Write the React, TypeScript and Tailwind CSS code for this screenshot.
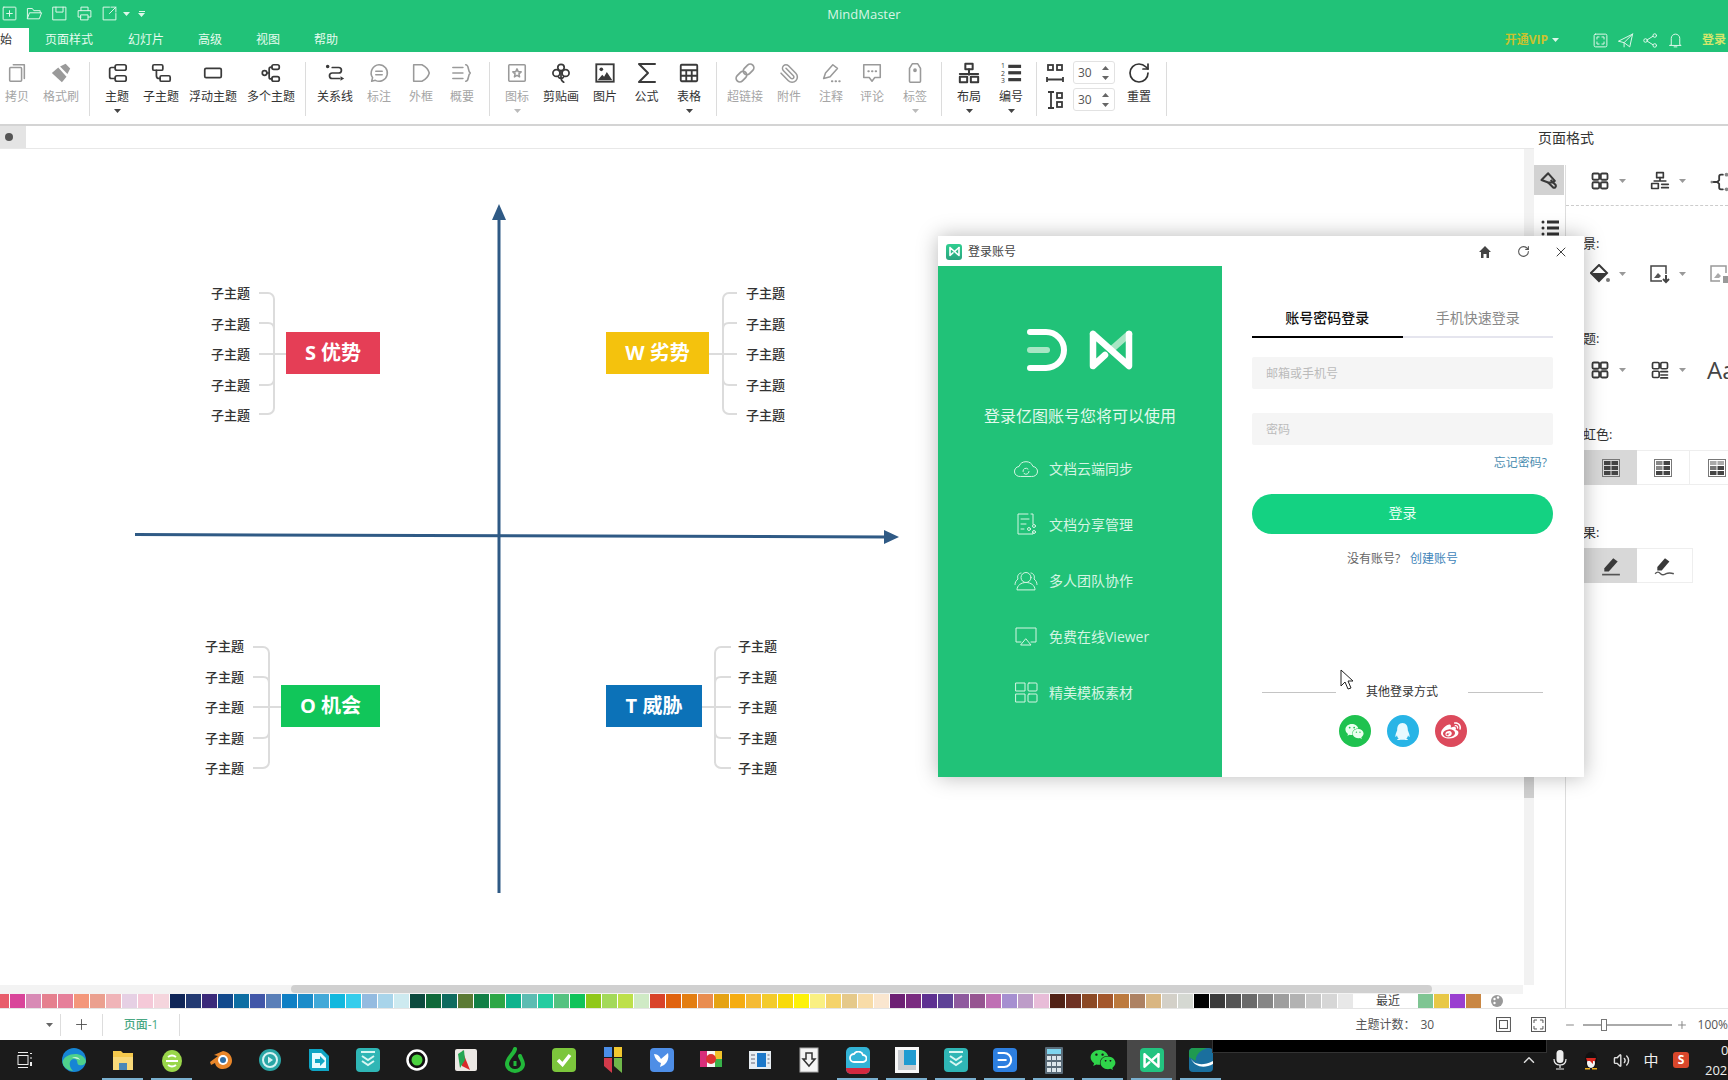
import type { ReactNode } from 'react';
import { Paperclip, RotateCw, X, RotateCcw, Plus, Minus, ChevronUp, Volume2 } from 'lucide-react';
import { FaWeixin, FaQq, FaWeibo } from 'react-icons/fa';

const DARK = '#3a3a3a';
const OFF = '#9a9a9a';

function Svg({ children, size = 22, color = DARK, sw = 1.9, className = '' }: { children: ReactNode; size?: number; color?: string; sw?: number; className?: string }) {
    return (
        <svg width={size} height={size} viewBox="0 0 24 24" fill="none" stroke={color} strokeWidth={sw} strokeLinecap="round" strokeLinejoin="round" className={className}>
            {children}
        </svg>
    );
}

function Caret({ color = '#444' }: { color?: string }) {
    return (
        <svg width="7" height="4" viewBox="0 0 7 4" className="shrink-0">
            <path d="M0 0h7L3.5 4z" fill={color} />
        </svg>
    );
}

function Tool({ w, label, off, caret, children }: { w: string; label: string; off?: boolean; caret?: boolean; children: ReactNode }) {
    return (
        <div className={`flex flex-col items-center ${w}`}>
            <div className="h-[22px] flex items-center justify-center">{children}</div>
            <div className={`mt-[5px] h-[16px] text-[12px] leading-[16px] whitespace-nowrap ${off ? 'text-[#a5a5a5]' : 'text-[#333]'}`}>{label}</div>
            {caret && (
                <div className="mt-[4px]">
                    <Caret color={off ? '#bbb' : '#444'} />
                </div>
            )}
        </div>
    );
}

function Sep() {
    return <div className="w-px h-[54px] bg-[#dcdcdc] shrink-0" />;
}

function GridIcon({ size = 20 }: { size?: number }) {
    return (
        <Svg size={size} sw={2.2}>
            <rect x="3" y="3" width="8" height="7.5" rx="1.5" />
            <rect x="13" y="3" width="8" height="7.5" rx="1.5" />
            <rect x="3" y="13.5" width="8" height="7.5" rx="1.5" />
            <rect x="13" y="13.5" width="8" height="7.5" rx="1.5" />
        </Svg>
    );
}

function TableCell({ shade }: { shade: number }) {
    const light = shade === 0 ? '#444' : shade === 1 ? '#888' : '#aaa';
    return (
        <svg width="18" height="18" viewBox="0 0 18 18">
            <rect x="0.5" y="0.5" width="17" height="17" fill="none" stroke="#777" />
            <rect x="2" y="2" width="6.5" height="4" fill={light} />
            <rect x="9.5" y="2" width="6.5" height="4" fill={shade === 2 ? '#aaa' : '#444'} />
            <rect x="2" y="7" width="6.5" height="4" fill={shade === 2 ? '#777' : light} />
            <rect x="9.5" y="7" width="6.5" height="4" fill="#444" />
            <rect x="2" y="12" width="6.5" height="4" fill="#444" />
            <rect x="9.5" y="12" width="6.5" height="4" fill="#444" />
        </svg>
    );
}

function BowTie({ size = 44, pale = '#a8e6c4', sw = 6.5 }: { size?: number; pale?: string; sw?: number }) {
    return (
        <svg width={size} height={size} viewBox="0 0 44 40" fill="none" strokeLinecap="round" strokeLinejoin="round">
            <path d="M23 19L40 4" stroke={pale} strokeWidth={sw} />
            <path d="M4 4v32l12-11M4 4l36 32V4" stroke="#fff" strokeWidth={sw} />
        </svg>
    );
}

function Subs() {
    return (
        <div className="flex flex-col justify-between h-[142px] w-[39px]">
            {[0, 1, 2, 3, 4].map((i) => (
                <div key={i} className="h-[20px] text-[13px] leading-[20px] font-medium text-[#333] whitespace-nowrap">
                    子主题
                </div>
            ))}
        </div>
    );
}

function Topic({ label, className }: { label: string; className: string }) {
    return <div className={`h-[42px] mb-[2px] flex items-center justify-center text-white font-bold text-[20px] whitespace-nowrap ${className}`}>{label}</div>;
}

const SWATCHES = [
    'bg-[#e85d6c] w-[10px]', 'bg-[#d9459a]', 'bg-[#d88ab5]', 'bg-[#e5808f]', 'bg-[#e67f9a]', 'bg-[#f4977b]', 'bg-[#eba08f]', 'bg-[#f0b4b8]', 'bg-[#e6d0e4]', 'bg-[#f5c9d8]', 'bg-[#f5d5dd]',
    'bg-[#0f2557]', 'bg-[#233a72]', 'bg-[#3b2a7a]', 'bg-[#12498c]', 'bg-[#0e6ea3]', 'bg-[#4257a8]', 'bg-[#5a7fb8]', 'bg-[#0f7fc4]', 'bg-[#1c8cc9]', 'bg-[#42a9d8]', 'bg-[#12b8de]', 'bg-[#36cdec]', 'bg-[#94bbe0]', 'bg-[#a8d4ea]', 'bg-[#cdeaf0]',
    'bg-[#0c4a3e]', 'bg-[#10693a]', 'bg-[#0f6b5f]', 'bg-[#5b7a35]', 'bg-[#117f46]', 'bg-[#2da646]', 'bg-[#0fb38d]', 'bg-[#5cbcb2]', 'bg-[#25cca0]', 'bg-[#55c280]', 'bg-[#10c35a]', 'bg-[#90c81a]', 'bg-[#a3d95a]', 'bg-[#bde04a]', 'bg-[#cfeac5]',
    'bg-[#d9432a]', 'bg-[#e0630f]', 'bg-[#e37e12]', 'bg-[#e98d50]', 'bg-[#e5a314]', 'bg-[#f5ac12]', 'bg-[#f5bb35]', 'bg-[#f3cb2c]', 'bg-[#f8da0a]', 'bg-[#fdf209]', 'bg-[#faf082]', 'bg-[#f5d36a]', 'bg-[#e5c98a]', 'bg-[#f8dca8]', 'bg-[#fae6cf]',
    'bg-[#6d2174]', 'bg-[#7a2c80]', 'bg-[#5e3191]', 'bg-[#5e4296]', 'bg-[#8f5a9e]', 'bg-[#965591]', 'bg-[#bf70b4]', 'bg-[#a68fd0]', 'bg-[#bd9cc8]', 'bg-[#e8bcd8]',
    'bg-[#512216]', 'bg-[#6e3224]', 'bg-[#8c4a26]', 'bg-[#a3572c]', 'bg-[#bc7a3e]', 'bg-[#ad8263]', 'bg-[#d9b682]', 'bg-[#d3d0c8]', 'bg-[#d5d8d2]',
    'bg-[#000000]', 'bg-[#3a3a3a]', 'bg-[#555555]', 'bg-[#6a6a6a]', 'bg-[#868686]', 'bg-[#9e9e9e]', 'bg-[#b2b2b2]', 'bg-[#c8c8c8]', 'bg-[#d6d6d6]', 'bg-[#e8e8e8]',
];

function Swatch({ className }: { className: string }) {
    const width = className.includes('w-[') ? '' : 'w-[16px]';
    return <div className={`h-full shrink-0 border-r border-white ${width} ${className}`} />;
}

function TaskIcon({ active, run, children }: { active?: boolean; run?: boolean; children: ReactNode }) {
    return (
        <div className={`relative w-[49px] h-[40px] shrink-0 flex items-center justify-center ${active ? 'bg-[#484848]' : ''}`}>
            {children}
            {run && <div className="absolute bottom-0 left-[4px] right-[4px] h-[2px] bg-[#7ab0cf]" />}
        </div>
    );
}

function Tile({ className, children }: { className: string; children?: ReactNode }) {
    return <div className={`w-[24px] h-[24px] rounded-[4px] flex items-center justify-center ${className}`}>{children}</div>;
}

function Taskbar() {
    return (
        <div className="relative h-[40px] bg-[#1b1b1b] flex items-center shrink-0 text-white">
            <TaskIcon>
                <svg width="16" height="18" viewBox="0 0 16 18" fill="none" stroke="#eee">
                    <path d="M1 1.500h10M1 16.500h10" />
                    <rect x="1" y="4.500" width="10" height="9" />
                    <path d="M14 2v1M14 6.500v1M14 11v4" strokeWidth="2" />
                </svg>
            </TaskIcon>
            <TaskIcon>
                <svg width="26" height="26" viewBox="0 0 26 26">
                    <circle cx="13" cy="13" r="12" fill="#1685d4" />
                    <path d="M1.500 15C3 6 22 3 25 14c0 3-3 5-7 4-3-1 0-6-5-6-5 0-6 7-1 12-6-1-10-4-10.500-9z" fill="#4fd18b" />
                    <path d="M11 11c3-2 7-1 8 2-1-1-6-2-8-2z" fill="#fff" opacity="0.7" />
                </svg>
            </TaskIcon>
            <TaskIcon run>
                <svg width="24" height="24" viewBox="0 0 24 24">
                    <path d="M2 3h8l2 2h10v17H2z" fill="#f5c94d" />
                    <path d="M2 9h20v13H2z" fill="#f8d97a" />
                    <rect x="8" y="15" width="8" height="7" fill="#4a88b8" />
                </svg>
            </TaskIcon>
            <TaskIcon run>
                <svg width="24" height="26" viewBox="0 0 24 26">
                    <ellipse cx="12" cy="14" rx="10" ry="11" fill="#9ad64a" />
                    <path d="M6 14h12M8 10a6 5 0 0 1 8 0M8 18a6 5 0 0 0 8 0" stroke="#fff" strokeWidth="2" fill="none" />
                </svg>
            </TaskIcon>
            <TaskIcon>
                <svg width="24" height="24" viewBox="0 0 24 24">
                    <path d="M1 14l8-6-4-1 9-4c6 1 9 5 9 10 0 5-5 8-9 8-4 0-7-2-8-6l-4 2z" fill="#e8862a" />
                    <circle cx="14" cy="12" r="5" fill="#fff" />
                    <circle cx="14" cy="12" r="3" fill="#2f6fa8" />
                </svg>
            </TaskIcon>
            <TaskIcon>
                <svg width="24" height="24" viewBox="0 0 24 24">
                    <circle cx="12" cy="12" r="11" fill="#2aa6a6" />
                    <circle cx="12" cy="12" r="7" fill="none" stroke="#d8f3f3" strokeWidth="2" />
                    <path d="M10 8.500l5 3.500-5 3.500z" fill="#d8f3f3" />
                </svg>
            </TaskIcon>
            <TaskIcon>
                <svg width="24" height="26" viewBox="0 0 24 26">
                    <path d="M2 2h13l7 7v15H6c-2 0-4-2-4-4z" fill="#0fa5c4" />
                    <path d="M5 6h9l5 5v10H5z" fill="#e8fbff" />
                    <path d="M8 12h5V9l5 5-5 5v-3H8z" fill="#12a7c5" />
                </svg>
            </TaskIcon>
            <TaskIcon>
                <Tile className="bg-[#2fb6b5]">
                    <svg width="16" height="18" viewBox="0 0 16 18" fill="none" stroke="#d9f7f3" strokeWidth="2">
                        <path d="M1 1h14M2 5l6 4 6-4M2 10l6 4 6-4" />
                    </svg>
                </Tile>
            </TaskIcon>
            <TaskIcon>
                <svg width="22" height="22" viewBox="0 0 22 22">
                    <circle cx="11" cy="11" r="9.500" fill="#111" stroke="#fff" strokeWidth="2.500" />
                    <circle cx="11" cy="11" r="5.500" fill="#4bd23f" />
                </svg>
            </TaskIcon>
            <TaskIcon>
                <svg width="22" height="24" viewBox="0 0 22 24">
                    <rect x="0" y="1" width="22" height="22" rx="2" fill="#ece8e4" />
                    <path d="M7 2l8 20-8-4z" fill="#d82a2a" />
                    <path d="M3 6l6-4 1 10-5 8z" fill="#26a653" />
                </svg>
            </TaskIcon>
            <TaskIcon>
                <svg width="22" height="26" viewBox="0 0 22 26" fill="none">
                    <path d="M11 2c-1 5-8 9-8 15 0 4 4 7 8 7s8-3 8-7c0-3-2-5-3-8" stroke="#22b83a" strokeWidth="4" strokeLinecap="round" />
                    <path d="M11 14v5" stroke="#22b83a" strokeWidth="3" />
                </svg>
            </TaskIcon>
            <TaskIcon>
                <Tile className="bg-[#7cc63c]">
                    <svg width="16" height="14" viewBox="0 0 16 14" fill="none" stroke="#fff" strokeWidth="3.500">
                        <path d="M2 7l4.500 4.500L14 2" />
                    </svg>
                </Tile>
            </TaskIcon>
            <TaskIcon>
                <svg width="20" height="28" viewBox="0 0 20 28">
                    <rect x="1" y="1" width="8" height="10" fill="#4b8ee8" />
                    <rect x="11" y="1" width="8" height="10" fill="#f2c82f" />
                    <path d="M1 12h8v15l-8-7z" fill="#d23a4a" />
                    <path d="M11 12h8v15l-8-7z" fill="#70b84a" />
                </svg>
            </TaskIcon>
            <TaskIcon>
                <Tile className="bg-[#4e8ee6]">
                    <svg width="18" height="18" viewBox="0 0 18 18">
                        <path d="M1 3c4 0 6 3 7 5l7-6c1 4 0 9-4 12l-4 2 1-4C5 11 2 8 1 3z" fill="#fff" />
                    </svg>
                </Tile>
            </TaskIcon>
            <TaskIcon>
                <svg width="24" height="20" viewBox="0 0 24 20">
                    <rect x="1" y="1" width="7" height="16" fill="#d82d7a" />
                    <rect x="8" y="1" width="8" height="16" fill="#f6f6f6" />
                    <rect x="16" y="1" width="7" height="8" fill="#f2c22a" />
                    <rect x="16" y="9" width="7" height="8" fill="#38b24a" />
                    <circle cx="12" cy="9" r="5" fill="#d33" />
                </svg>
            </TaskIcon>
            <TaskIcon>
                <svg width="22" height="18" viewBox="0 0 22 18">
                    <rect width="22" height="18" fill="#e8edf2" />
                    <rect x="8" y="2" width="9" height="14" fill="#1d78c9" />
                    <path d="M2 4h4M2 8h4M2 12h4M18.500 4h2M18.500 8h2M18.500 12h2" stroke="#667" />
                </svg>
            </TaskIcon>
            <TaskIcon>
                <svg width="20" height="26" viewBox="0 0 20 26">
                    <rect x="1" y="1" width="18" height="24" fill="#f4f4f4" stroke="#aaa" />
                    <path d="M7 6h6v6h3l-6 7-6-7h3z" fill="none" stroke="#333" strokeWidth="1.500" />
                </svg>
            </TaskIcon>
            <TaskIcon run>
                <div className="w-[24px] h-[27px] rounded-[5px] overflow-hidden bg-[#33b3d6] flex flex-col">
                    <div className="flex-1 flex items-center justify-center">
                        <svg width="18" height="12" viewBox="0 0 18 12" fill="none" stroke="#fff" strokeWidth="1.800">
                            <path d="M5 11a4 4 0 0 1 0-8 5 5 0 0 1 9 1 3.500 3.500 0 0 1 0 7z" />
                        </svg>
                    </div>
                    <div className="h-[6px] bg-[#d3283f]" />
                </div>
            </TaskIcon>
            <TaskIcon run>
                <svg width="24" height="26" viewBox="0 0 24 26">
                    <rect width="24" height="26" fill="#f8f8f8" />
                    <rect x="3" y="3" width="18" height="20" fill="#c8ccd0" />
                    <rect x="9" y="3" width="12" height="15" fill="#1f9bd1" />
                </svg>
            </TaskIcon>
            <TaskIcon run>
                <Tile className="bg-[#2fb6b5]">
                    <svg width="16" height="18" viewBox="0 0 16 18" fill="none" stroke="#d9f7f3" strokeWidth="2">
                        <path d="M1 1h14M2 5l6 4 6-4M2 10l6 4 6-4" />
                    </svg>
                </Tile>
            </TaskIcon>
            <TaskIcon run>
                <Tile className="bg-[#2d7fe0]">
                    <svg width="18" height="18" viewBox="0 0 40 44" fill="none" stroke="#fff" strokeWidth="5" strokeLinecap="round">
                        <path d="M4 5h14a17 17 0 0 1 0 34H4" />
                        <path d="M4 22h18" />
                    </svg>
                </Tile>
            </TaskIcon>
            <TaskIcon run>
                <svg width="18" height="27" viewBox="0 0 18 27">
                    <rect width="18" height="27" rx="1" fill="#5a6b78" />
                    <rect x="2" y="2" width="14" height="5" fill="#7fd5ee" />
                    {[9, 15, 21].map((y) => [2, 7, 12].map((x) => <rect key={`${x}-${y}`} x={x} y={y} width="4" height="4" fill="#dce5ea" />))}
                </svg>
            </TaskIcon>
            <TaskIcon run>
                <FaWeixin size={26} color="#2fd44a" />
            </TaskIcon>
            <TaskIcon run active>
                <Tile className="bg-[#23c480]">
                    <BowTie size={17} pale="#fff" />
                </Tile>
            </TaskIcon>
            <TaskIcon run>
                <svg width="24" height="24" viewBox="0 0 24 24">
                    <rect width="24" height="24" rx="4" fill="#1a6f9e" />
                    <path d="M0 4C0 2 2 0 4 0h14C10 3 6 8 7 13L0 9z" fill="#1f9a50" />
                    <path d="M2 11c4 6 12 7 22 2v3C15 21 6 19 2 11z" fill="#fff" />
                </svg>
            </TaskIcon>

            <div className="absolute left-[1212px] top-0 w-[335px] h-[13px] bg-black border border-[#333] border-t-0" />

            <div className="ml-auto flex items-center h-full">
                <div className="w-[32px] flex justify-center">
                    <ChevronUp size={18} color="#ddd" />
                </div>
                <div className="w-[30px] flex justify-center">
                    <svg width="14" height="20" viewBox="0 0 14 20" fill="none">
                        <rect x="3.500" y="0" width="7" height="13" rx="3.500" fill="#eee" />
                        <path d="M1 9c0 4 2 6 6 6s6-2 6-6M7 15v3M3 19h8" stroke="#eee" strokeWidth="1.200" />
                    </svg>
                </div>
                <div className="w-[32px] flex justify-center">
                    <svg width="16" height="20" viewBox="0 0 16 20">
                        <ellipse cx="8" cy="10" rx="6" ry="8" fill="#111" />
                        <ellipse cx="8" cy="13" rx="4" ry="5" fill="#f4f4f4" />
                        <path d="M3 8h10l-1 3-2 0 0 3-3-3H4z" fill="#d8281f" />
                        <path d="M2 18h5v1.500H2zM9 18h5v1.500H9z" fill="#f2b21f" />
                    </svg>
                </div>
                <div className="w-[28px] flex justify-center">
                    <Volume2 size={17} color="#ddd" />
                </div>
                <div className="w-[32px] text-center text-[15px] text-[#eee]">中</div>
                <div className="w-[28px] flex justify-center">
                    <div className="w-[16px] h-[16px] rounded-[3px] bg-[#d9472b] text-center text-[12px] leading-[16px] font-bold text-white">S</div>
                </div>
                <div className="w-[24px] ml-[9px] pl-[1px] text-[13px] leading-[20px] overflow-hidden whitespace-nowrap text-[#eee]">
                    <div className="pl-[16px]">0</div>
                    <div>202</div>
                </div>
            </div>
        </div>
    );
}

function LoginDialog() {
    const features = [
        {
            label: '文档云端同步',
            icon: (
                <Svg size={25} color="#d5f5e3" sw={1}>
                    <path d="M6 20a5 5 0 0 1-1-10 7.500 7.500 0 0 1 14 0 5 5 0 0 1-1 10z" />
                    <path d="M9 15a3 3 0 0 1 5-2.500M15 15a3 3 0 0 1-5 2" />
                </Svg>
            ),
        },
        {
            label: '文档分享管理',
            icon: (
                <Svg size={24} color="#d5f5e3" sw={1}>
                    <path d="M14 2H4v20h15v-2M17 2h2v10" />
                    <path d="M7 7h8M7 12h5M7 17h3" />
                    <circle cx="20" cy="14" r="1.500" />
                    <circle cx="15" cy="17" r="1.500" />
                    <circle cx="20" cy="20" r="1.500" />
                </Svg>
            ),
        },
        {
            label: '多人团队协作',
            icon: (
                <Svg size={25} color="#d5f5e3" sw={1}>
                    <circle cx="12" cy="9" r="5" />
                    <path d="M3 21c0-4 4-7 9-7s9 3 9 7z" />
                    <path d="M7 4.500C4 5 3 8 4 10.500 2 12 1 14 1 16M17 4.500c3 .5 4 3.500 3 6 2 1.500 3 3.500 3 5.500" />
                </Svg>
            ),
        },
        {
            label: '免费在线Viewer',
            icon: (
                <Svg size={24} color="#d5f5e3" sw={1}>
                    <path d="M7 18H2V4h20v14h-5" />
                    <path d="M12 15l5 6H7z" />
                </Svg>
            ),
        },
        {
            label: '精美模板素材',
            icon: (
                <Svg size={24} color="#d5f5e3" sw={1}>
                    <rect x="2" y="3" width="9" height="8" />
                    <rect x="14" y="3" width="9" height="8" rx="1" />
                    <rect x="2" y="14" width="9" height="8" />
                    <rect x="14" y="14" width="9" height="8" rx="1" />
                </Svg>
            ),
        },
    ];

    return (
        <div className="absolute left-[938px] top-[236px] w-[646px] h-[541px] bg-white flex flex-col shadow-[0_0_20px_rgba(0,0,0,0.28)]">
            <div className="h-[30px] flex items-center shrink-0 pl-[8px] pt-[1px]">
                <div className="w-[16px] h-[16px] rounded-[3px] bg-gradient-to-b from-[#2fcf90] to-[#2aa37e] flex items-center justify-center">
                    <BowTie size={11} pale="#fff" />
                </div>
                <span className="ml-[6px] text-[12px] text-[#444]">登录账号</span>
                <div className="ml-auto flex items-center pr-[15px]">
                    <svg width="12" height="12" viewBox="0 0 12 12">
                        <path d="M6 0l6 6h-2v6H7.500V8h-3v4H2V6H0z" fill="#444" />
                    </svg>
                    <RotateCcw size={13} color="#555" className="ml-[26px] -scale-x-100" />
                    <X size={16} color="#333" className="ml-[23px]" strokeWidth={1.4} />
                </div>
            </div>
            <div className="flex flex-1">
                <div className="w-[284px] bg-[#21c278] flex flex-col">
                    <div className="flex justify-center items-end gap-[22px] pt-[62px]">
                        <svg width="40" height="43" viewBox="0 0 40 43" fill="none" strokeLinecap="round">
                            <path d="M3 3h16a18 18 0 0 1 0 36H3" stroke="#fff" strokeWidth="6" />
                            <path d="M3 21h17" stroke="#a8e6c4" strokeWidth="6" />
                        </svg>
                        <BowTie size={44} />
                    </div>
                    <div className="mt-[32px] h-[24px] text-center text-[16px] leading-[24px] text-[#e2f9ec]">登录亿图账号您将可以使用</div>
                    <div className="mt-[28px] pl-[76px] flex flex-col gap-[32px]">
                        {features.map((f) => (
                            <div key={f.label} className="flex items-center h-[24px] gap-[11px]">
                                <div className="w-[24px] flex justify-center">{f.icon}</div>
                                <span className="text-[14px] text-[#d5f5e3]">{f.label}</span>
                            </div>
                        ))}
                    </div>
                </div>
                <div className="flex-1 pl-[30px] pr-[31px] pt-[40px] flex flex-col">
                    <div className="flex">
                        <div className="flex-1 h-[32px] pt-[1px] border-b-2 border-black text-center text-[14px] leading-[22px] text-[#111] font-medium">账号密码登录</div>
                        <div className="flex-1 h-[32px] pt-[1px] border-b-2 border-[#e5e5ee] text-center text-[14px] leading-[22px] text-[#888]">手机快速登录</div>
                    </div>
                    <div className="mt-[19px] h-[32px] bg-[#f5f5f5] rounded-[2px] pl-[14px] pt-[1px] text-[12px] leading-[32px] text-[#bbb]">邮箱或手机号</div>
                    <div className="mt-[24px] h-[32px] bg-[#f5f5f5] rounded-[2px] pl-[14px] pt-[1px] text-[12px] leading-[32px] text-[#bbb]">密码</div>
                    <div className="mt-[9px] h-[18px] pr-[6px] text-right text-[12px] leading-[18px] text-[#4a8db0]">忘记密码?</div>
                    <div className="mt-[22px] h-[40px] rounded-full bg-[#14d282] text-center text-[14px] leading-[38px] text-[#e8fff4]">登录</div>
                    <div className="mt-[16px] h-[18px] flex justify-center gap-[10px] text-[12px] leading-[18px]">
                        <span className="text-[#666]">没有账号?</span>
                        <span className="text-[#3f86ba]">创建账号</span>
                    </div>
                    <div className="mt-[114px] h-[20px] px-[10px] flex items-center justify-between">
                        <div className="w-[74px] h-px bg-[#c4c4c4]" />
                        <span className="text-[12px] text-[#333]">其他登录方式</span>
                        <div className="w-[75px] h-px bg-[#c4c4c4]" />
                    </div>
                    <div className="mt-[13px] flex justify-center gap-[16px]">
                        <div className="w-[32px] h-[32px] rounded-full bg-[#1fc24f] flex items-center justify-center">
                            <FaWeixin size={19} color="#eaffef" />
                        </div>
                        <div className="w-[32px] h-[32px] rounded-full bg-[#28b4e6] flex items-center justify-center">
                            <FaQq size={17} color="#e8f9ff" />
                        </div>
                        <div className="w-[32px] h-[32px] rounded-full bg-[#dc4a5c] flex items-center justify-center">
                            <FaWeibo size={20} color="#fff" />
                        </div>
                    </div>
                </div>
            </div>
            <svg className="absolute left-[402px] top-[433px]" width="14" height="21" viewBox="0 0 14 21">
                <path d="M1 1v16l4-4 3 7 3-1-3-7h5z" fill="#fff" stroke="#222" strokeWidth="1" />
            </svg>
        </div>
    );
}

function Canvas() {
    return (
        <div className="relative flex-1 bg-white overflow-hidden">
            <svg className="absolute inset-0" width="1527" height="835" viewBox="0 149 1527 835" fill="none">
                <g stroke="#2f5a85" strokeWidth="3">
                    <path d="M499 216V893" />
                    <path d="M135 534.500L888 537" />
                </g>
                <path d="M499 204l7 16h-14z" fill="#2f5a85" />
                <path d="M899 537l-15 7v-14z" fill="#2f5a85" />
                <g stroke="#dcdcdc" strokeWidth="2">
                    <path d="M259 293h9a6 6 0 0 1 6 6v109a6 6 0 0 1-6 6h-9M259 323h9q6 0 6 6M259 385h9q6 0 6-6M259 354h28" />
                    <path d="M737 293h-8a6 6 0 0 0-6 6v109a6 6 0 0 0 6 6h8M737 323h-8q-6 0-6 6M737 385h-8q-6 0-6-6M709 354h28" />
                    <path d="M253 647h10a6 6 0 0 1 6 6v109a6 6 0 0 1-6 6h-10M253 677h10q6 0 6 6M253 738h10q6 0 6-6M253 707h28" />
                    <path d="M731 647h-10a6 6 0 0 0-6 6v109a6 6 0 0 0 6 6h10M731 677h-10q-6 0-6 6M731 738h-10q-6 0-6-6M702 707h29" />
                </g>
            </svg>

            <div className="absolute left-[211px] top-[134px] flex items-center gap-[36px]">
                <Subs />
                <Topic label="S 优势" className="w-[94px] bg-[#e53e56]" />
            </div>
            <div className="absolute left-[606px] top-[134px] flex items-center gap-[37px]">
                <Topic label="W 劣势" className="w-[103px] bg-[#f4c20d]" />
                <Subs />
            </div>
            <div className="absolute left-[205px] top-[487px] flex items-center gap-[37px]">
                <Subs />
                <Topic label="O 机会" className="w-[99px] bg-[#11c65a]" />
            </div>
            <div className="absolute left-[606px] top-[487px] flex items-center gap-[36px]">
                <Topic label="T 威胁" className="w-[96px] bg-[#0c72b8]" />
                <Subs />
            </div>

            {/* vertical scrollbar */}
            <div className="absolute right-0 top-0 bottom-0 w-[10px] bg-[#f2f2f2]">
                <div className="absolute left-0 right-0 top-[200px] bottom-[187px] bg-[#cfcfcf]" />
            </div>
        </div>
    );
}

function RightPanel() {
    return (
        <div className="flex-1 flex flex-col min-w-0 overflow-hidden bg-white">
            <div className="h-[39px] shrink-0 pl-[4px] pt-[2px] text-[14px] leading-[20px] text-[#333]">页面格式</div>
            <div className="flex flex-1">
                <div className="w-[32px] shrink-0 border-r border-[#ddd]">
                    <div className="w-[30px] h-[30px] bg-[#d2d2d2] flex items-center justify-center">
                        <svg width="20" height="20" viewBox="0 0 24 24" fill="none" stroke="#3a3a3a" strokeWidth="2.500" strokeLinejoin="round">
                            <path d="M3 12l8-8 8 9-3 2-5 0z" />
                            <path d="M14 12l6 6c1 2-1 4-3 3l-6-6" />
                        </svg>
                    </div>
                    <div className="mt-[24px] flex justify-center">
                        <svg width="18" height="18" viewBox="0 0 18 18" fill="#333">
                            <circle cx="2" cy="3" r="1.500" />
                            <rect x="6" y="1.500" width="12" height="3" />
                            <circle cx="2" cy="9" r="1.500" />
                            <rect x="6" y="7.500" width="12" height="3" />
                            <circle cx="2" cy="15" r="1.500" />
                            <rect x="6" y="13.500" width="12" height="3" />
                        </svg>
                    </div>
                </div>
                <div className="flex-1 min-w-0 text-[#333]">
                    <div className="h-[41px] flex items-start pl-[24px] pt-[6px] border-b border-dashed border-[#ccc]">
                        <div className="w-[60px] shrink-0 flex items-center gap-[9px]">
                            <GridIcon />
                            <Caret color="#999" />
                        </div>
                        <div className="w-[60px] shrink-0 flex items-center gap-[9px]">
                            <Svg size={20} sw={2}>
                                <rect x="8" y="2" width="8" height="6" />
                                <path d="M12 8v4M5 12h14" />
                                <rect x="2" y="15" width="8" height="6" />
                                <path d="M14 16h8M14 20h8" />
                            </Svg>
                            <Caret color="#999" />
                        </div>
                        <Svg size={22} sw={2} className="shrink-0">
                            <circle cx="2" cy="12" r="1.500" fill="#888" stroke="none" />
                            <path d="M4 12h4M14 4h-2a2 2 0 0 0-2 2v4l-2 2 2 2v4a2 2 0 0 0 2 2h2" />
                            <circle cx="18" cy="4" r="2" fill="#888" stroke="none" />
                            <circle cx="18" cy="20" r="2" fill="#888" stroke="none" />
                        </Svg>
                    </div>

                    <div className="ml-[4px] mt-[27px] h-[20px] text-[13px] leading-[20px]">背景:</div>
                    <div className="mt-[9px] h-[24px] flex items-center pl-[24px]">
                        <div className="w-[60px] shrink-0 flex items-center gap-[9px]">
                            <svg width="20" height="20" viewBox="0 0 20 20">
                                <path d="M9 1l8 8-8 8-8-8z" fill="none" stroke="#3a3a3a" strokeWidth="2" />
                                <path d="M2 9h15l-8 8z" fill="#3a3a3a" />
                                <circle cx="18" cy="16" r="2" fill="#777" />
                            </svg>
                            <Caret color="#999" />
                        </div>
                        <div className="w-[60px] shrink-0 flex items-center gap-[9px]">
                            <svg width="20" height="20" viewBox="0 0 20 20" fill="none" stroke="#444" strokeWidth="1.500">
                                <path d="M12 17H1V2h15v8" />
                                <path d="M4 14l4-5 3 3-2 2z" fill="#555" stroke="none" />
                                <path d="M16 11v7M13 15l3 3 3-3" strokeWidth="2" />
                            </svg>
                            <Caret color="#999" />
                        </div>
                        <svg width="22" height="20" viewBox="0 0 22 20" fill="none" stroke="#999" strokeWidth="1.500" className="shrink-0">
                            <path d="M10 17H1V2h15v7" />
                            <path d="M4 14l4-5 3 3-2 2z" fill="#aaa" stroke="none" />
                            <rect x="13" y="12" width="8" height="7" fill="#999" stroke="none" />
                        </svg>
                    </div>

                    <div className="ml-[4px] mt-[42px] h-[20px] text-[13px] leading-[20px]">主题:</div>
                    <div className="mt-[10px] h-[24px] flex items-center pl-[24px]">
                        <div className="w-[60px] shrink-0 flex items-center gap-[9px]">
                            <GridIcon />
                            <Caret color="#999" />
                        </div>
                        <div className="w-[60px] shrink-0 flex items-center gap-[9px]">
                            <Svg size={20} sw={2}>
                                <rect x="3" y="3" width="8" height="7.500" rx="1.500" />
                                <rect x="13" y="3" width="8" height="7.500" rx="1.500" />
                                <rect x="3" y="13.500" width="8" height="7.500" rx="1.500" />
                                <path d="M13 14h8M13 18h8M13 21.500h8" />
                            </Svg>
                            <Caret color="#999" />
                        </div>
                        <span className="-ml-[3px] text-[24px] leading-[24px] text-[#444] whitespace-nowrap">Aa</span>
                    </div>

                    <div className="ml-[4px] mt-[42px] h-[20px] text-[13px] leading-[20px]">彩虹色:</div>
                    <div className="mt-[6px] flex w-[178px]">
                        <div className="w-[71px] h-[35px] pl-[36px] bg-[#d8d8d8] flex items-center shrink-0">
                            <TableCell shade={0} />
                        </div>
                        <div className="w-[53px] h-[35px] flex items-center justify-center border border-l-0 border-[#eee] shrink-0">
                            <TableCell shade={1} />
                        </div>
                        <div className="w-[54px] h-[35px] flex items-center justify-center border border-l-0 border-[#eee] shrink-0">
                            <TableCell shade={2} />
                        </div>
                    </div>

                    <div className="ml-[4px] mt-[37px] h-[20px] text-[13px] leading-[20px]">效果:</div>
                    <div className="mt-[6px] flex">
                        <div className="w-[71px] h-[35px] pl-[35px] bg-[#d8d8d8] flex items-center shrink-0">
                            <svg width="20" height="20" viewBox="0 0 18 18">
                                <path d="M3 11l8-9 4 3-8 9H3z" fill="#3a3a3a" />
                                <rect x="1" y="16" width="16" height="1.500" fill="#555" />
                            </svg>
                        </div>
                        <div className="w-[56px] h-[35px] flex items-center justify-center border border-l-0 border-[#eee] shrink-0">
                            <svg width="22" height="20" viewBox="0 0 20 18" fill="none">
                                <path d="M3 10l7-8 4 3-7 8H3z" fill="#3a3a3a" />
                                <path d="M1 16c2-2 3-2 5 0s3 1 5 0 4-1 7 0" stroke="#555" strokeWidth="1.300" />
                            </svg>
                        </div>
                    </div>
                </div>
            </div>
        </div>
    );
}

function HeaderIcon({ children, size = 17 }: { children: ReactNode; size?: number }) {
    return (
        <Svg size={size} color="#dff7ea" sw={1.400}>
            {children}
        </Svg>
    );
}

function Header() {
    return (
        <div className="relative h-[52px] bg-[#21c278] shrink-0">
            <div className="absolute -left-[3px] top-[5px] flex items-center">
                <div className="w-[25px] flex justify-center">
                    <HeaderIcon>
                        <rect x="3" y="3" width="18" height="18" rx="1" />
                        <path d="M12 8v8M8 12h8" />
                    </HeaderIcon>
                </div>
                <div className="w-[25px] flex justify-center">
                    <HeaderIcon>
                        <path d="M2 19V5h7l2 3h9v3M2 19l3-8h17l-3 8z" />
                    </HeaderIcon>
                </div>
                <div className="w-[25px] flex justify-center">
                    <HeaderIcon>
                        <path d="M3 3h18v18H3zM7 3v7h10V3" />
                    </HeaderIcon>
                </div>
                <div className="w-[25px] flex justify-center">
                    <HeaderIcon>
                        <path d="M7 8V3h10v5M7 17H3V8h18v9h-4" />
                        <rect x="7" y="14" width="10" height="7" />
                    </HeaderIcon>
                </div>
                <div className="w-[25px] flex justify-center">
                    <HeaderIcon>
                        <path d="M12 3H3v18h18v-9M14 3h7v7M21 3l-9 9" />
                    </HeaderIcon>
                </div>
                <div className="ml-[1px]">
                    <Caret color="#dff7ea" />
                </div>
                <div className="ml-[8px] flex flex-col items-center gap-[1px]">
                    <div className="w-[6px] h-px bg-[#dff7ea]" />
                    <Caret color="#dff7ea" />
                </div>
            </div>
            <div className="absolute left-0 right-0 top-[5px] text-center text-[13px] leading-[18px] text-[#d8f5e5]">MindMaster</div>

            <div className="absolute left-0 right-0 top-[28px] h-[24px] flex text-[12px] leading-[24px] text-[#e6fbef]">
                <div className="w-[29px] bg-white text-[#333] overflow-hidden">始</div>
                <div className="w-[80px] text-center">页面样式</div>
                <div className="w-[74px] text-center">幻灯片</div>
                <div className="w-[54px] text-center">高级</div>
                <div className="w-[62px] text-center">视图</div>
                <div className="w-[54px] text-center">帮助</div>
                <div className="ml-auto flex items-center pr-[2px]">
                    <span className="font-bold text-[#c9c22f]">开通VIP</span>
                    <div className="ml-[4px]">
                        <Caret color="#dff7ea" />
                    </div>
                    <div className="ml-[33px]">
                        <HeaderIcon>
                            <rect x="3" y="3" width="18" height="18" rx="2" />
                            <path d="M7 10V7h3M17 10V7h-3M7 14v3h3M17 14v3h-3" />
                        </HeaderIcon>
                    </div>
                    <div className="ml-[8px]">
                        <HeaderIcon>
                            <path d="M22 3L2 13l8 2 12-12zM22 3l-4 18-8-6v6" />
                        </HeaderIcon>
                    </div>
                    <div className="ml-[8px]">
                        <HeaderIcon>
                            <circle cx="5" cy="12" r="2.500" />
                            <circle cx="18" cy="5" r="2.500" />
                            <circle cx="18" cy="19" r="2.500" />
                            <path d="M7.500 11l8-5M7.500 13l8 5" />
                        </HeaderIcon>
                    </div>
                    <div className="ml-[8px]">
                        <HeaderIcon>
                            <path d="M6 18V9a6 6 0 0 1 12 0v9l2 1H4zM10 21h4" />
                        </HeaderIcon>
                    </div>
                    <span className="ml-[18px] font-bold text-[#d4e66c] whitespace-nowrap">登录</span>
                </div>
            </div>
        </div>
    );
}

function SpinBox() {
    return (
        <div className="relative w-[42px] h-[23px] border border-[#e2e2e2] rounded-[3px] pl-[4px] text-[12px] leading-[21px] text-[#555]">
            30
            <div className="absolute right-[5px] top-[4px] flex flex-col gap-[6px]">
                <svg width="7" height="4" viewBox="0 0 7 4">
                    <path d="M0 4h7L3.500 0z" fill="#666" />
                </svg>
                <Caret color="#666" />
            </div>
        </div>
    );
}

function Toolbar() {
    return (
        <div className="h-[74px] shrink-0 bg-white border-b-2 border-[#d4d4d4] flex items-start pt-[10px]">
            <div className="flex pr-px">
                <Tool w="w-[34px]" label="拷贝" off>
                    <Svg color={OFF} sw={1.7}>
                        <rect x="4" y="6" width="13" height="15" rx="1" />
                        <path d="M8 3h12v15" />
                    </Svg>
                </Tool>
                <Tool w="w-[54px]" label="格式刷" off>
                    <svg width="22" height="22" viewBox="0 0 24 24" fill={OFF}>
                        <path d="M2 12l7-6 9 10-5 6z" />
                        <path d="M11 5l6-3 5 5-3 6z" />
                    </svg>
                </Tool>
            </div>
            <Sep />
            <div className="flex pl-[2px] pr-[9px]">
                <Tool w="w-[50px]" label="主题" caret>
                    <Svg>
                        <rect x="10" y="3" width="12" height="6" rx="2" />
                        <rect x="10" y="15" width="12" height="6" rx="2" />
                        <path d="M10 6H6a2 2 0 0 0-2 2v8a2 2 0 0 0 2 2h4" />
                    </Svg>
                </Tool>
                <Tool w="w-[38px]" label="子主题">
                    <Svg>
                        <rect x="3" y="3" width="11" height="6" rx="1.500" />
                        <path d="M7 9v6a3 3 0 0 0 3 3h1" />
                        <rect x="11" y="15" width="11" height="6" rx="1.500" />
                    </Svg>
                </Tool>
                <Tool w="w-[66px]" label="浮动主题">
                    <Svg>
                        <rect x="3" y="7" width="18" height="10" rx="1.500" />
                    </Svg>
                </Tool>
                <Tool w="w-[50px]" label="多个主题">
                    <Svg>
                        <circle cx="5" cy="12" r="2.500" />
                        <rect x="13" y="3" width="8" height="5" rx="2" />
                        <rect x="13" y="16" width="8" height="5" rx="2" />
                        <path d="M7.500 12H10M13 5.500h-1a2 2 0 0 0-2 2v9a2 2 0 0 0 2 2h1" />
                    </Svg>
                </Tool>
            </div>
            <Sep />
            <div className="flex pl-[8px] pr-[5px]">
                <Tool w="w-[42px]" label="关系线">
                    <Svg>
                        <circle cx="4" cy="5" r="1" fill={DARK} />
                        <path d="M9 6h7a3 3 0 0 1 0 6H9a3 3 0 0 0 0 6h8" />
                        <path d="M18 15.500l4 2.500-4 2.500z" fill={DARK} stroke="none" />
                    </Svg>
                </Tool>
                <Tool w="w-[46px]" label="标注" off>
                    <Svg color={OFF} sw={1.7}>
                        <path d="M12 3a9 9 0 1 1-4 17l-4 1 1-4a9 9 0 0 1 7-14z" />
                        <path d="M8.500 10h7M8.500 14h7" />
                    </Svg>
                </Tool>
                <Tool w="w-[38px]" label="外框" off>
                    <Svg color={OFF} sw={1.7}>
                        <path d="M4 3h9c4 2 7 5 8 9-1 4-4 7-8 9H4z" />
                    </Svg>
                </Tool>
                <Tool w="w-[44px]" label="概要" off>
                    <Svg color={OFF} sw={1.7}>
                        <path d="M2 6h11M2 12h11M2 18h11M16 3c4 0 2 7 5 9-3 2-1 9-5 9" />
                    </Svg>
                </Tool>
            </div>
            <Sep />
            <div className="flex pl-[6px] pr-[5px]">
                <Tool w="w-[42px]" label="图标" off caret>
                    <Svg color={OFF} sw={1.7}>
                        <rect x="3" y="3" width="18" height="18" rx="1" />
                        <path d="M12 7.500l1.300 3 3.200.3-2.400 2.200.7 3.200-2.800-1.700-2.800 1.700.7-3.200-2.400-2.200 3.200-.3z" />
                    </Svg>
                </Tool>
                <Tool w="w-[46px]" label="剪贴画">
                    <Svg>
                        <circle cx="12" cy="6" r="3.500" />
                        <circle cx="7" cy="12" r="3.800" />
                        <circle cx="17" cy="12" r="3.800" />
                        <path d="M12 10v7c0 2 1 4 3 5M9 16c1 2 2 2 3 1M15 16c-1 2-2 2-3 1" />
                    </Svg>
                </Tool>
                <Tool w="w-[42px]" label="图片">
                    <svg width="22" height="22" viewBox="0 0 24 24">
                        <rect x="2.500" y="2.500" width="19" height="19" fill="none" stroke={DARK} strokeWidth="2" />
                        <circle cx="8" cy="8" r="2" fill={DARK} />
                        <path d="M4 20l5-6 2 2 3-5 6 9z" fill={DARK} />
                    </svg>
                </Tool>
                <Tool w="w-[41px]" label="公式">
                    <Svg size={24} sw={2}>
                        <path d="M20 3H4l9 9-9 9h16" />
                    </Svg>
                </Tool>
                <Tool w="w-[44px]" label="表格" caret>
                    <svg width="22" height="22" viewBox="0 0 24 24" fill="none" stroke={DARK} strokeWidth="2">
                        <rect x="3" y="3" width="18" height="18" rx="1" />
                        <path d="M3 9h18M9 9v12M15 9v12M3 15h18" />
                    </svg>
                </Tool>
            </div>
            <Sep />
            <div className="flex pl-[6px] pr-[4px]">
                <Tool w="w-[44px]" label="超链接" off>
                    <Svg color={OFF} sw={1.9}>
                        <g transform="rotate(-45 12 12)">
                            <rect x="0" y="8" width="13" height="8" rx="4" />
                            <rect x="11" y="8" width="13" height="8" rx="4" />
                        </g>
                    </Svg>
                </Tool>
                <Tool w="w-[44px]" label="附件" off>
                    <Paperclip size={21} color={OFF} strokeWidth={1.8} className="-scale-x-100" />
                </Tool>
                <Tool w="w-[40px]" label="注释" off>
                    <Svg color={OFF} sw={1.7}>
                        <path d="M4 18l2-6 8-9 5 4-8 9z" />
                        <path d="M13 21h.5M17 21h.5M21 21h.5" strokeWidth="2.200" />
                    </Svg>
                </Tool>
                <Tool w="w-[42px]" label="评论" off>
                    <Svg color={OFF} sw={1.7}>
                        <path d="M3 3h18v14h-6l-3 4-3-4H3z" />
                        <path d="M8 10h.5M12 10h.5M16 10h.5" strokeWidth="2.200" />
                    </Svg>
                </Tool>
                <Tool w="w-[44px]" label="标签" off caret>
                    <Svg color={OFF} sw={1.7}>
                        <path d="M9 2h6l3 5v14a1 1 0 0 1-1 1H7a1 1 0 0 1-1-1V7z" />
                        <circle cx="12" cy="9" r="1.200" fill={OFF} />
                    </Svg>
                </Tool>
            </div>
            <Sep />
            <div className="flex pl-[6px] pr-[4px]">
                <Tool w="w-[42px]" label="布局" caret>
                    <Svg sw={2.200}>
                        <rect x="8" y="2" width="8" height="6" />
                        <path d="M12 8v6M2 13h20" />
                        <rect x="2" y="16" width="8" height="6" />
                        <rect x="14" y="16" width="8" height="6" />
                    </Svg>
                </Tool>
                <Tool w="w-[42px]" label="编号" caret>
                    <svg width="22" height="22" viewBox="0 0 24 24" fill={DARK}>
                        <text x="1" y="7" fontSize="7.500" stroke="none">1</text>
                        <text x="1" y="15" fontSize="7.500" stroke="none">2</text>
                        <text x="1" y="23" fontSize="7.500" stroke="none">3</text>
                        <rect x="9" y="3" width="14" height="3.500" />
                        <rect x="9" y="10" width="14" height="3.500" />
                        <rect x="9" y="17.500" width="14" height="3.500" />
                    </svg>
                </Tool>
            </div>
            <Sep />
            <div className="flex flex-col pl-[9px] gap-[4px] -mt-[1px]">
                <div className="flex items-center gap-[9px]">
                    <svg width="18" height="20" viewBox="0 0 18 20" fill="none" stroke={DARK} strokeWidth="1.800">
                        <rect x="2" y="2" width="5" height="5" />
                        <rect x="11" y="2" width="5" height="5" />
                        <path d="M1 14v5M17 14v5M1 16.500h16" />
                    </svg>
                    <SpinBox />
                </div>
                <div className="flex items-center gap-[9px]">
                    <svg width="18" height="20" viewBox="0 0 18 20" fill="none" stroke={DARK} strokeWidth="1.800">
                        <path d="M2 2h6M2 18h6M5 2v16" />
                        <rect x="11" y="3" width="5" height="5" />
                        <rect x="11" y="12" width="5" height="5" />
                    </svg>
                    <SpinBox />
                </div>
            </div>
            <div className="flex pr-[3px]">
                <Tool w="w-[48px]" label="重置">
                    <RotateCw size={24} color="#333" strokeWidth={1.700} />
                </Tool>
            </div>
            <Sep />
        </div>
    );
}

function StatusBar() {
    return (
        <div className="h-[32px] shrink-0 bg-white border-t border-[#e4e4e4] flex items-center text-[12px] text-[#555]">
            <div className="w-[60px] pl-[46px]">
                <Caret color="#666" />
            </div>
            <div className="w-px h-[22px] bg-[#ddd]" />
            <div className="w-[41px] flex justify-center">
                <Plus size={17} color="#444" strokeWidth={1.200} />
            </div>
            <div className="w-px h-[22px] bg-[#ddd]" />
            <div className="w-[77px] text-center font-medium text-[#4aa884]">页面-1</div>
            <div className="w-px h-[22px] bg-[#ddd]" />
            <span className="ml-[1175px] whitespace-nowrap">主题计数：</span>
            <span className="ml-[5px]">30</span>
            <svg className="ml-[62px]" width="15" height="15" viewBox="0 0 15 15" fill="none" stroke="#555">
                <rect x="0.500" y="0.500" width="14" height="14" />
                <rect x="3.500" y="3.500" width="8" height="8" />
            </svg>
            <svg className="ml-[20px]" width="15" height="15" viewBox="0 0 15 15" fill="none" stroke="#555">
                <rect x="0.500" y="0.500" width="14" height="14" />
                <path d="M3 6V3h3M12 6V3H9M3 9v3h3M12 9v3H9" />
            </svg>
            <Minus size={12} color="#888" className="ml-[18px]" />
            <div className="relative ml-[7px] w-[89px] h-[2px] bg-[#aaa]">
                <div className="absolute left-[18px] -top-[5px] w-[6px] h-[12px] border border-[#777] bg-white" />
            </div>
            <Plus size={12} color="#888" className="ml-[4px]" />
            <span className="ml-[10px] whitespace-nowrap">100%</span>
        </div>
    );
}

export default function App() {
    return (
        <div className="relative w-[1728px] h-[1080px] overflow-hidden flex flex-col bg-white [font-family:'Open_Sans','Noto_Sans_CJK_SC',sans-serif]">
            <Header />
            <Toolbar />
            <div className="flex flex-1 min-h-0">
                <div className="w-[1534px] shrink-0 flex flex-col">
                    <div className="h-[23px] shrink-0 border-b border-[#e8e8e8] bg-white">
                        <div className="w-[26px] h-full bg-[#e4e4e4] flex items-center pl-[5px]">
                            <div className="w-[8px] h-[8px] rounded-full bg-[#555]" />
                        </div>
                    </div>
                    <Canvas />
                    <div className="h-[9px] shrink-0 bg-[#f3f3f3] mr-[11px]">
                        <div className="ml-[291px] w-[1141px] h-[8px] rounded-full bg-[#d0d0d0]" />
                    </div>
                    <div className="h-[14px] shrink-0 flex bg-white">
                        {SWATCHES.map((c) => (
                            <Swatch key={c} className={c} />
                        ))}
                        <div className="w-[64px] pl-[4px] text-center text-[12px] leading-[14px] text-[#444] shrink-0">最近</div>
                        <Swatch className="bg-[#7fc593]" />
                        <Swatch className="bg-[#e8c847]" />
                        <Swatch className="bg-[#9a3fd0]" />
                        <Swatch className="bg-[#c98744]" />
                        <svg className="ml-[8px]" width="14" height="14" viewBox="0 0 14 14">
                            <circle cx="7" cy="7" r="6" fill="#999" />
                            <circle cx="4.500" cy="5" r="1.200" fill="#fff" />
                            <circle cx="8" cy="3.500" r="1.200" fill="#fff" />
                            <circle cx="4.500" cy="9" r="1.200" fill="#fff" />
                        </svg>
                    </div>
                </div>
                <RightPanel />
            </div>
            <StatusBar />
            <Taskbar />
            <LoginDialog />
        </div>
    );
}
